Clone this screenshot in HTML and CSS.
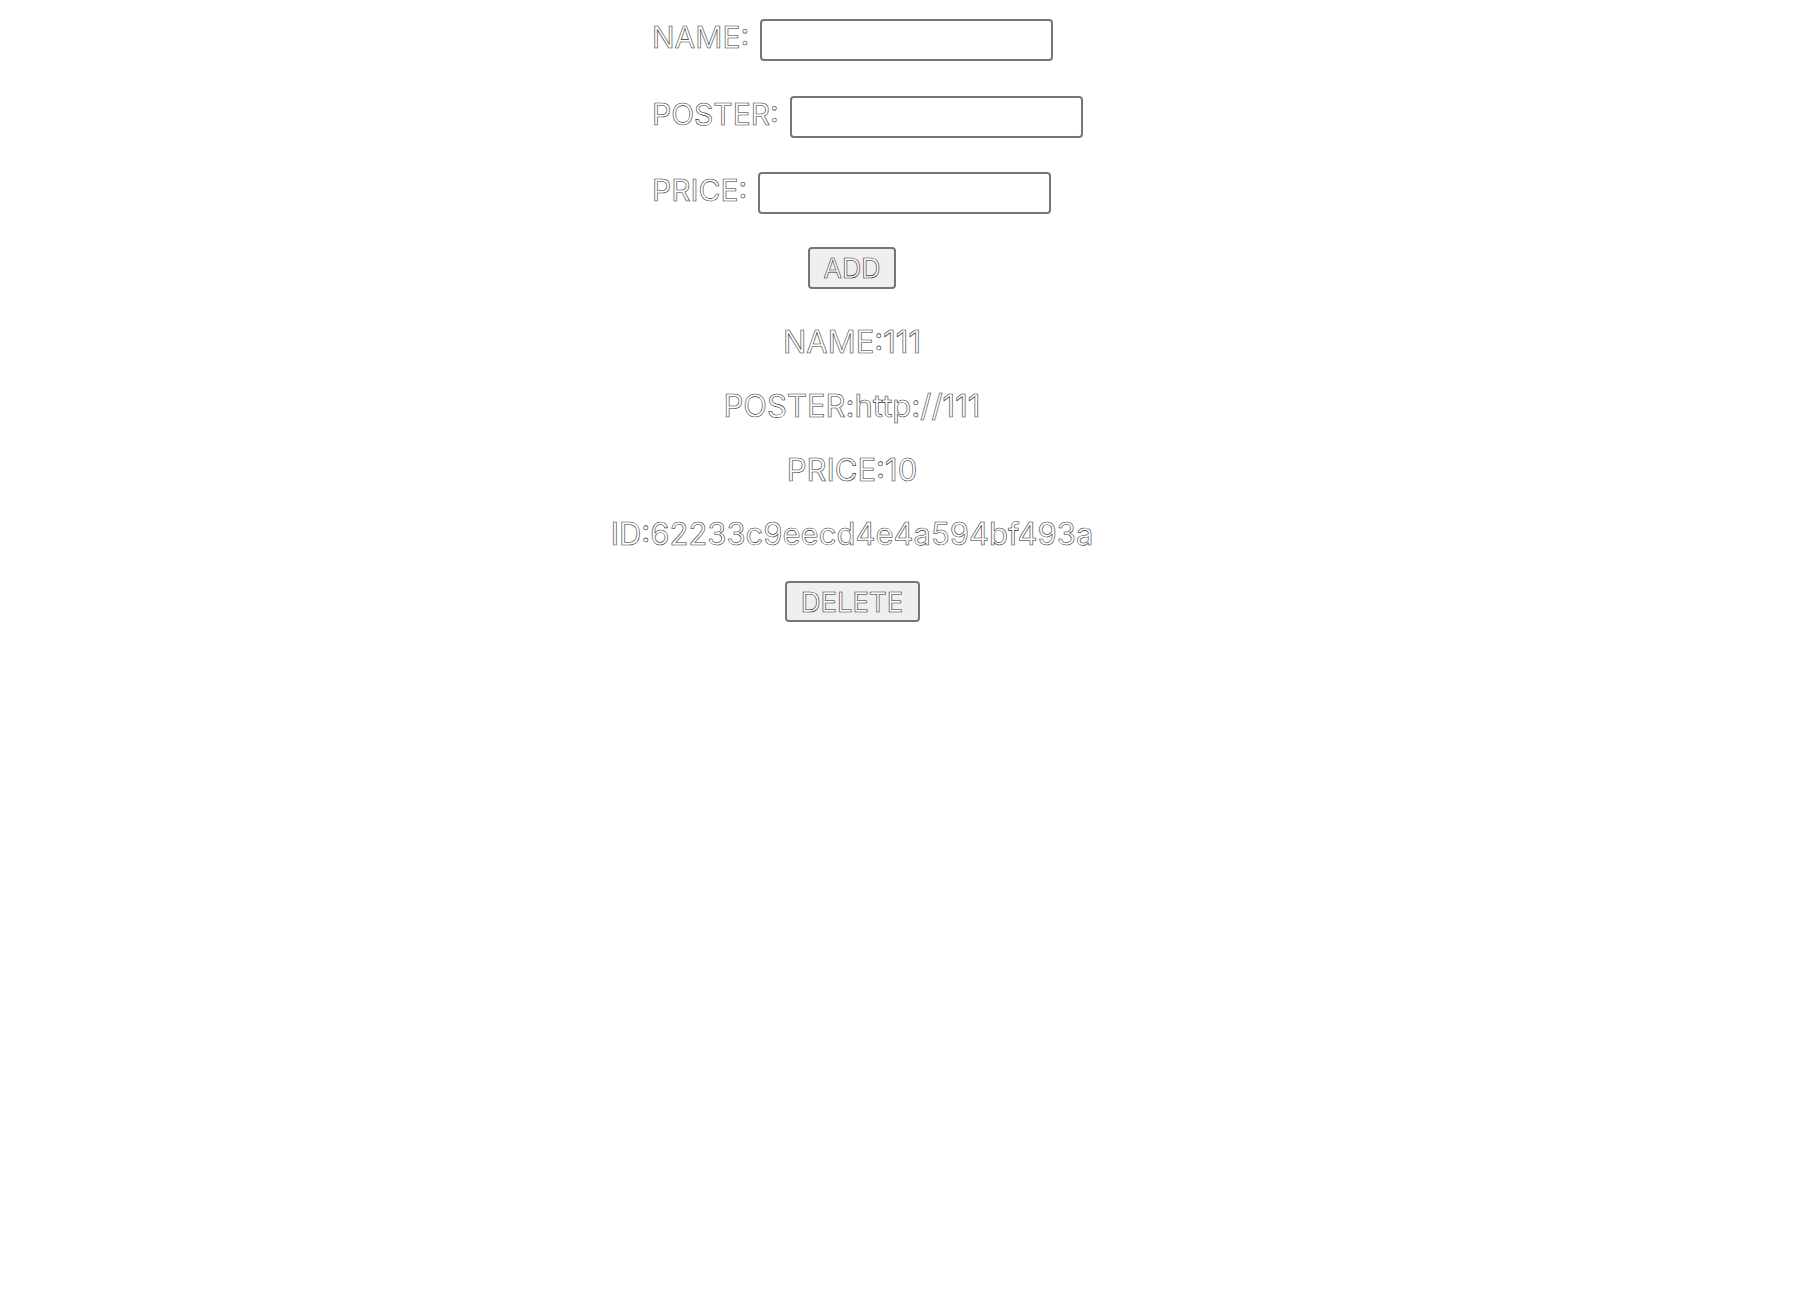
FILE: index.html
```html
<!DOCTYPE html>
<html>
<head>
<meta charset="utf-8">
<link rel="stylesheet" href="styles.css">
</head>
<body>
<div class="page">
  <form class="form">
    <div class="row"><label class="label">NAME:</label><input class="field" type="text"></div>
    <div class="row"><label class="label">POSTER:</label><input class="field" type="text"></div>
    <div class="row"><label class="label">PRICE:</label><input class="field" type="text"></div>
  </form>
  <div class="actions"><button class="btn btn-add" type="button">ADD</button></div>
  <div class="item">
    <p class="line">NAME:111</p>
    <p class="line">POSTER:http://111</p>
    <p class="line">PRICE:10</p>
    <p class="line">ID:62233c9eecd4e4a594bf493a</p>
    <button class="btn btn-delete" type="button">DELETE</button>
  </div>
</div>
</body>
</html>
```
FILE: styles.css
```css
html, body {
  margin: 0;
  padding: 0;
  background: #ffffff;
}
body {
  font-family: Inter, "Liberation Sans", sans-serif;
}
.page {
  width: 1704px;
  padding-top: 19px;
  text-align: center;
}
.form {
  width: 400px;
  margin: 0 auto;
  text-align: left;
}
.row {
  display: flex;
  align-items: flex-start;
  white-space: nowrap;
  height: 42px;
  margin-bottom: 34.5px;
}
.label {
  font-size: 30px;
  line-height: 36px;
  margin-top: 0;
  margin-right: 11px;
  color: #ffffff;
  -webkit-text-stroke: 0.6px #333333;
}
.field {
  box-sizing: border-box;
  width: 293px;
  height: 42px;
  margin: 0;
  padding: 2px 4px;
  border: 2px solid #767676;
  border-radius: 4px;
  background: #ffffff;
  font-size: 26px;
  font-family: Inter, sans-serif;
}
.actions {
  margin-top: -1.5px;
}
.btn {
  box-sizing: border-box;
  height: 42px;
  margin: 0;
  padding: 0 12px;
  border: 2px solid #767676;
  border-radius: 4px;
  background: #efefef;
  font-family: Inter, "Liberation Sans", sans-serif;
  font-size: 26.67px;
  line-height: 38px;
  color: #ffffff;
  -webkit-text-stroke: 0.6px #2a2a2a;
}
.btn-add {
  width: 88px;
}
.btn-delete {
  width: 135px;
  height: 41px;
  margin-top: 27px;
  font-size: 27.5px;
}
.item {
  padding-top: 33px;
}
.line {
  margin: 0 0 24px 0;
  font-size: 31px;
  line-height: 40px;
  color: #ffffff;
  -webkit-text-stroke: 0.6px #333333;
}
.line:last-of-type {
  margin-bottom: 0;
}
```
